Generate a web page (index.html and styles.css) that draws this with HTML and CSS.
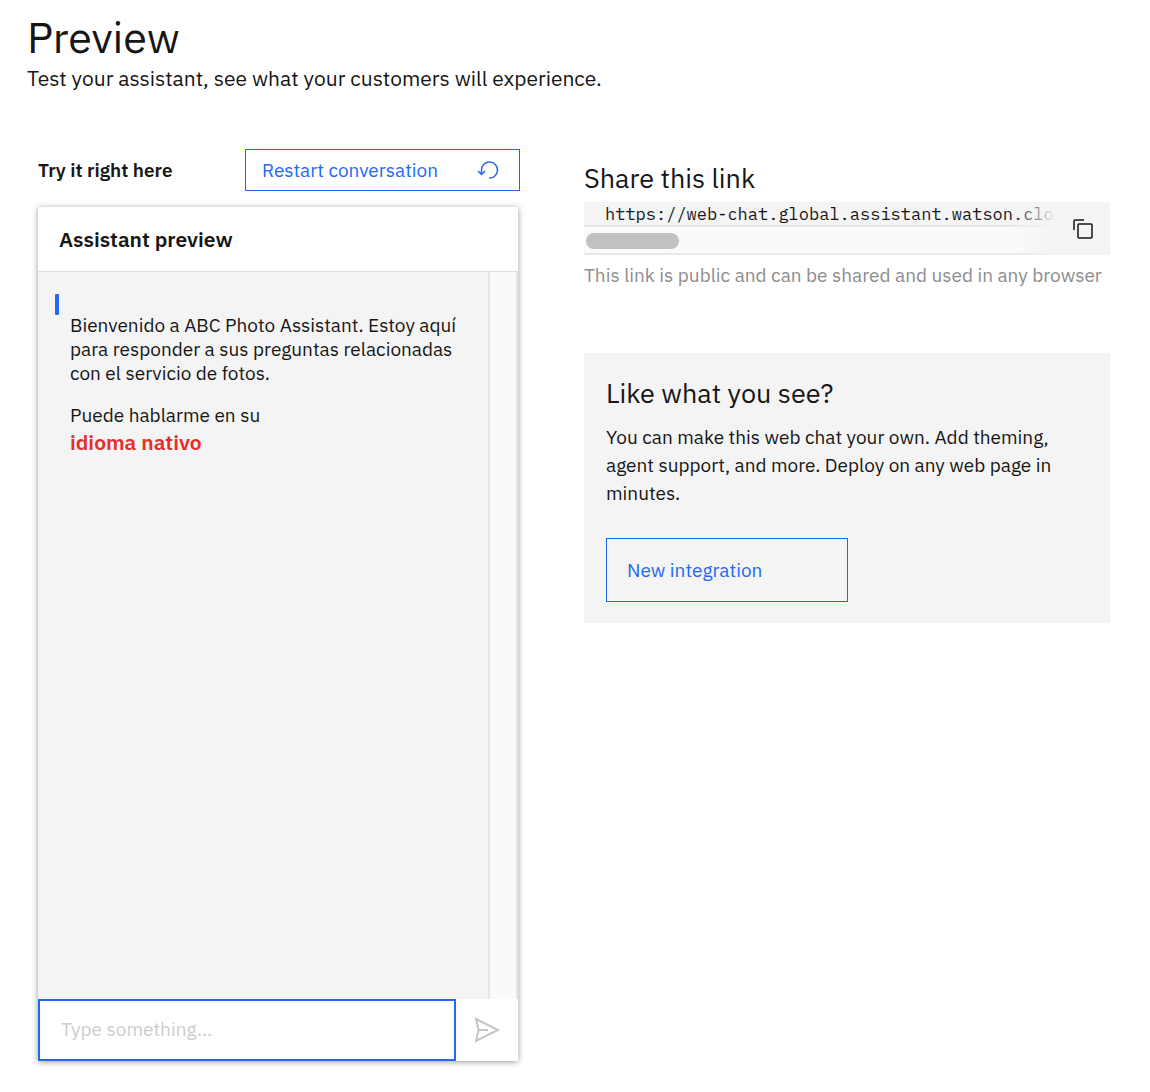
FILE: index.html
```html
<!DOCTYPE html>
<html lang="en">
<head>
<meta charset="utf-8">
<meta name="viewport" content="width=device-width, initial-scale=1">
<title>Preview</title>
<link rel="stylesheet" href="styles.css">
</head>
<body>
<div class="page">
  <header class="page-header">
    <h1 class="page-title">Preview</h1>
    <p class="page-subtitle">Test your assistant, see what your customers will experience.</p>
  </header>
  <main class="columns">
    <section class="try">
      <div class="try-bar">
        <h2 class="try-title">Try it right here</h2>
        <button class="button restart" type="button">
          <span>Restart conversation</span>
          <svg class="restart-icon" viewBox="0 0 22 20" width="22" height="20" aria-hidden="true"><path d="M12 18A8 8 0 1 0 4.500 10V14.500M1 11L4.500 14.500L8 11"/></svg>
        </button>
      </div>
      <div class="chat">
        <h3 class="chat-title">Assistant preview</h3>
        <div class="chat-body">
          <div class="messages" lang="es">
            <div class="marker"></div>
            <div class="message">
              <p>Bienvenido a ABC Photo Assistant. Estoy aquí<br>para responder a sus preguntas relacionadas<br>con el servicio de fotos.</p>
              <p>Puede hablarme en su<br><strong class="highlight">idioma nativo</strong></p>
            </div>
          </div>
          <div class="gutter"></div>
        </div>
        <form class="composer">
          <input class="composer-input" type="text" placeholder="Type something..." aria-label="Message">
          <button class="send" type="button" aria-label="Send">
            <svg viewBox="0 0 26 26" width="26" height="26" aria-hidden="true"><path d="M2 2L24 13L2 24L4.500 13ZM4.500 13H14"/></svg>
          </button>
        </form>
      </div>
    </section>
    <section class="share">
      <h2 class="section-title">Share this link</h2>
      <div class="snippet">
        <div class="snippet-view">
          <code class="snippet-text">https://web-chat.global.assistant.watson.cloud.ibm.com</code>
          <div class="scroll-track"><div class="scroll-thumb"></div></div>
        </div>
        <button class="copy" type="button" aria-label="Copy link">
          <svg viewBox="0 0 20 20" width="20" height="20" aria-hidden="true"><rect x="5" y="5" width="14" height="14" rx="1"/><path d="M1 11V2Q1 1 2 1H11"/></svg>
        </button>
      </div>
      <p class="share-note">This link is public and can be shared and used in any browser</p>
      <div class="card">
        <h2 class="section-title">Like what you see?</h2>
        <p class="card-text">You can make this web chat your own. Add theming,<br>agent support, and more. Deploy on any web page in<br>minutes.</p>
        <button class="button new-integration" type="button">New integration</button>
      </div>
    </section>
  </main>
</div>
</body>
</html>
```
FILE: styles.css
```css
* { box-sizing: border-box; }
body {
  margin: 0;
  background: #fff;
  color: #161616;
  font-family: "IBM Plex Sans", Roboto, "Liberation Sans", sans-serif;
  font-size: 19px;
}
h1, h2, h3, p { margin: 0; font-weight: 400; }
button, input { font: inherit; }
svg { fill: none; stroke: currentColor; flex: none; }

.page {
  display: flex;
  flex-direction: column;
  min-height: 100vh;
  padding: 10px 40px 31px 38px;
}
.page-header { padding-bottom: 56px; margin-left: -11px; }
.page-title { font-size: 43px; line-height: 54px; }
.page-subtitle { font-size: 21px; line-height: 29px; }

.columns {
  flex: 1;
  display: grid;
  grid-template-columns: minmax(0, 482fr) minmax(0, 526fr);
  gap: 64px;
}
.button {
  border: 1px solid #2066ee;
  background: transparent;
  color: #2468f6;
  text-align: left;
}

.try { display: flex; flex-direction: column; }
.try-bar { display: flex; justify-content: space-between; align-items: center; }
.try-title { font-size: 19px; font-weight: 600; }
.restart {
  display: flex;
  align-items: center;
  justify-content: space-between;
  width: 275px;
  height: 42px;
  padding: 0 20px 0 16px;
}
.restart-icon { stroke-width: 1.5; }

.chat {
  flex: 1;
  display: flex;
  flex-direction: column;
  margin: 16px 2px 0 0;
  background: #fff;
  box-shadow: 0 1px 6px rgba(0, 0, 0, 0.4);
}
.chat-title {
  height: 65px;
  padding: 0 21px;
  border-bottom: 1px solid #ddd;
  font-size: 21px;
  font-weight: 600;
  line-height: 65px;
}
.chat-body { flex: 1; display: flex; background: #f4f4f4; }
.messages { flex: 1; padding: 22px 17px; }
.marker { width: 4px; height: 21px; border-radius: 1px; background: #2468f6; }
.message { margin-top: -2px; padding-left: 15px; line-height: 24px; white-space: nowrap; }
.message p + p { margin-top: 18px; }
.highlight { color: #e62e2a; font-size: 21px; font-weight: 600; line-height: 30px; }
.gutter {
  width: 30px;
  background: #fafafa;
  border: solid #e6e6e6;
  border-width: 0 2px;
}
.composer { display: flex; height: 62px; }
.composer-input {
  flex: 1;
  min-width: 0;
  padding: 0 21px 2px;
  border: 2px solid #2468f6;
  border-radius: 0;
  background: #fff;
  outline: none;
}
.composer-input::placeholder { color: #cdcdcd; opacity: 1; }
.send {
  display: grid;
  place-items: center;
  width: 62px;
  padding: 0;
  border: 0;
  background: #fff;
  color: #c4c4c4;
  stroke-width: 2;
}

.section-title { font-size: 27px; line-height: 36px; }
.share { padding-top: 11px; }
.snippet { display: flex; height: 53px; margin-top: 6px; background: #f4f4f4; }
.snippet-view {
  position: relative;
  flex: 1;
  min-width: 0;
  overflow: hidden;
}
.snippet-view::after {
  content: "";
  position: absolute;
  inset: 0 0 0 auto;
  width: 44px;
  background: linear-gradient(to right, rgba(244, 244, 244, 0), #f4f4f4);
}
.snippet-text {
  display: block;
  height: 23px;
  padding-left: 21px;
  font-family: "IBM Plex Mono", "Liberation Mono", monospace;
  font-size: 17px;
  line-height: 25px;
  white-space: nowrap;
}
.scroll-track {
  height: 30px;
  padding: 6px 2px;
  border: solid #e8e8e8;
  border-width: 2px 0;
  background: #fafafa;
}
.scroll-thumb { width: 93px; height: 16px; border-radius: 8px; background: #c1c1c1; }
.copy {
  display: grid;
  place-items: center;
  width: 54px;
  padding: 0;
  border: 0;
  background: transparent;
  color: #161616;
  stroke-width: 1.5;
}
.share-note { margin-top: 7px; color: #8d8d8d; line-height: 26px; }
.card { margin-top: 65px; padding: 22px 22px 21px; background: #f4f4f4; }
.card-text { margin: 12px 0 31px; line-height: 28px; white-space: nowrap; }
.new-integration { width: 242px; height: 64px; padding: 0 20px; display: block; }
```
